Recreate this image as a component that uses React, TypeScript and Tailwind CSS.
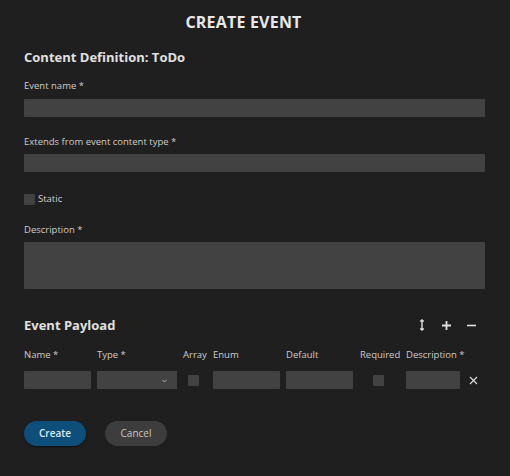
import React from "react";

const Label = ({ children }: { children: React.ReactNode }) => (
  <div className="text-[9.5px] leading-[12px] text-[#cccccc]">{children}</div>
);

const Box = ({ className }: { className: string }) => (
  <div className={"bg-[#424242] rounded-[1px] " + className} />
);

export default function App() {
  return (
    <div
      className="w-[510px] h-[476px] bg-[#1f1f1f] text-[#e6e6e6] overflow-hidden"
      style={{ fontFamily: '"Open Sans", "Noto Sans", sans-serif' }}
    >
      <div className="pl-6 pr-[25px] pt-[11px]">
        <h1 className="text-center text-[16px] leading-[22px] font-bold text-[#e8e8e8] tracking-[0.2px] pr-[22px]">
          CREATE EVENT
        </h1>
        <h2 className="mt-[15px] text-[13px] leading-[18px] font-bold text-[#e0e0e0]">
          Content Definition: ToDo
        </h2>

        <div className="mt-[14px]">
          <Label>Event name *</Label>
          <Box className="mt-[7px] h-[18px] w-full" />
        </div>

        <div className="mt-[19px]">
          <Label>Extends from event content type *</Label>
          <Box className="mt-[6px] h-[18px] w-full" />
        </div>

        <div className="mt-[22px] flex items-center gap-[3px]">
          <Box className="w-[11px] h-[11px]" />
          <span className="text-[9.5px] leading-[12px] text-[#d0d0d0] -mt-[2px]">Static</span>
        </div>

        <div className="mt-[19px]">
          <Label>Description *</Label>
          <Box className="mt-[6px] h-[47px] w-full" />
        </div>

        <div className="mt-[27px] flex items-center justify-between">
          <h2 className="text-[13px] leading-[18px] font-bold text-[#e0e0e0]">Event Payload</h2>
          <div className="flex items-center gap-[14px] pr-[8px] text-[#e0e0e0]">
            <svg width="10" height="12" viewBox="0 0 10 12" fill="none" stroke="currentColor" strokeWidth="1.4">
              <path d="M5 1v10M3.2 2.6L5 1l1.8 1.6M3.2 9.4L5 11l1.8-1.6" />
            </svg>
            <svg width="11" height="11" viewBox="0 0 11 11" stroke="currentColor" strokeWidth="1.8">
              <path d="M5.5 1v9M1 5.5h9" />
            </svg>
            <svg width="11" height="11" viewBox="0 0 11 11" stroke="currentColor" strokeWidth="1.6">
              <path d="M1 5.5h9" />
            </svg>
          </div>
        </div>

        <div className="mt-[15px] flex text-[9.5px] leading-[12px] text-[#cccccc]">
          <div className="w-[73px]">Name *</div>
          <div className="w-[86px]">Type *</div>
          <div className="w-[30px]">Array</div>
          <div className="w-[73px]">Enum</div>
          <div className="w-[74px]">Default</div>
          <div className="w-[46px]">Required</div>
          <div>Description *</div>
        </div>

        <div className="mt-[10px] flex items-center">
          <Box className="w-[67px] h-[18px] mr-[6px]" />
          <div className="w-[80px] h-[18px] bg-[#424242] mr-[11px] relative">
            <svg className="absolute right-[10px] top-[8px]" width="5" height="4" viewBox="0 0 5 4" fill="none" stroke="#b0b0b0" strokeWidth="1">
              <path d="M0.5 0.8L2.5 3L4.5 0.8" />
            </svg>
          </div>
          <Box className="w-[11px] h-[11px] mr-[14px]" />
          <Box className="w-[67px] h-[18px] mr-[6px]" />
          <Box className="w-[67px] h-[18px] mr-[20px]" />
          <Box className="w-[11px] h-[11px] mr-[22px]" />
          <Box className="w-[54px] h-[18px] mr-[9px]" />
          <svg width="9" height="9" viewBox="0 0 9 9" stroke="#d8d8d8" strokeWidth="1.2">
            <path d="M1 1l7 7M8 1L1 8" />
          </svg>
        </div>

        <div className="mt-[32px] flex gap-[19px]">
          <button className="w-[62px] h-[25px] rounded-full bg-[#0d4f7a] text-[10px] font-semibold text-[#dfe9f2] shadow-[0_1px_2px_rgba(0,0,0,0.5)]">
            Create
          </button>
          <button className="w-[62px] h-[25px] rounded-full bg-[#3d3d3d] text-[10px] text-[#c8c8c8]">
            Cancel
          </button>
        </div>
      </div>
    </div>
  );
}
